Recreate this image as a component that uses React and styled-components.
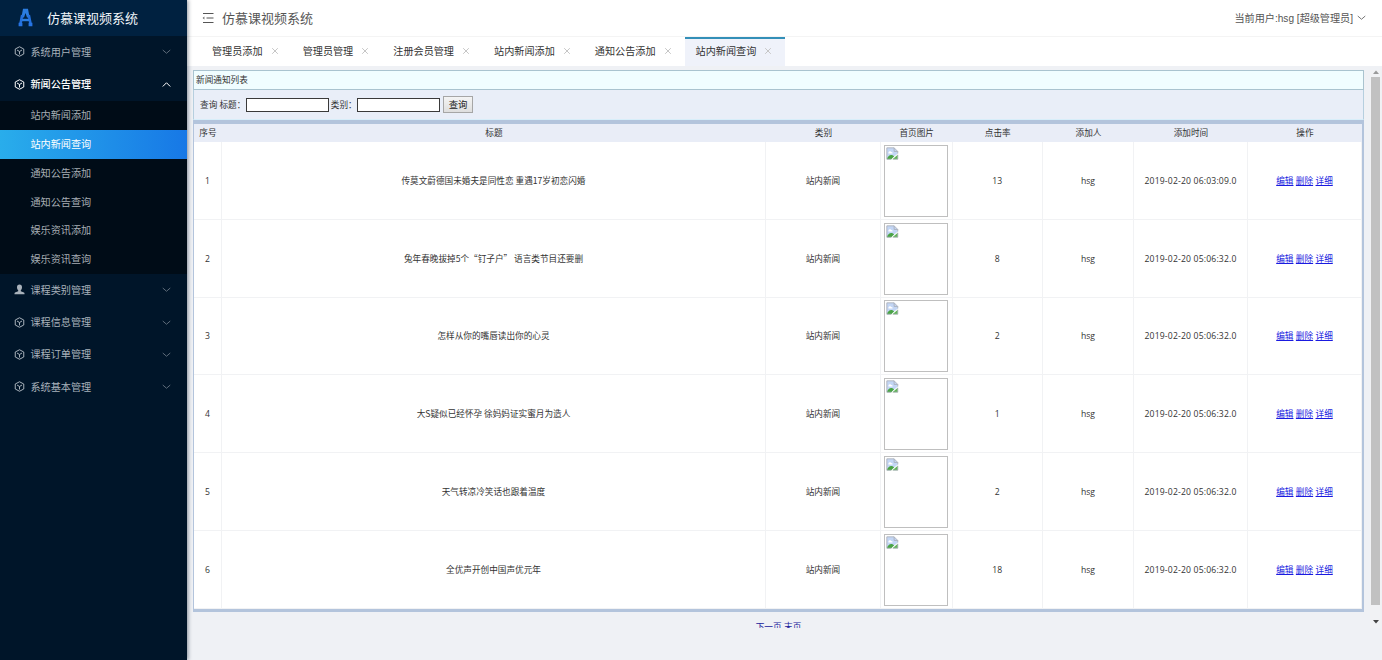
import React from 'react';
import styled, { createGlobalStyle } from 'styled-components';

const GlobalStyle = createGlobalStyle`
  * {
    box-sizing: border-box;
  }

  body {
    margin: 0;
    font-family: 'Open Sans', 'Noto Sans CJK SC', sans-serif;
    background: #eff1f5;
    overflow: hidden;
  }
`;

const Page = styled.div`
  display: flex;
  width: 1382px;
  height: 660px;
`;

/* ---------- sidebar ---------- */

const Sidebar = styled.aside`
  width: 187px;
  flex: none;
  background: #001529;
  box-shadow: 1px 0 4px rgba(0, 21, 41, 0.45);
  z-index: 1;
`;

const Brand = styled.div`
  height: 36px;
  padding: 0 0 1px 18px;
  display: flex;
  align-items: center;
  gap: 14px;
  background: #002140;
  color: #f2f6fa;
  font: 13px/20px 'Noto Sans CJK SC', sans-serif;
  white-space: nowrap;
`;

const MenuGroup = styled.div`
  height: 32.35px;
  padding: 0 16px 1px 14px;
  display: flex;
  align-items: center;
  color: ${(props) => (props.$open ? '#fff' : '#a9b2bb')};
  font: ${(props) => (props.$open ? 500 : 400)} 10.15px/16px 'Noto Sans CJK SC', sans-serif;

  span {
    flex: 1;
    margin-left: 5.5px;
  }
`;

const SubMenu = styled.div`
  padding-top: 0.6px;
  background: #000c17;
`;

const SubItem = styled.div`
  height: 28.8px;
  padding-left: 30.5px;
  font: 10.15px/28.8px 'Noto Sans CJK SC', sans-serif;
  color: ${(props) => (props.$active ? '#fff' : '#a6adb3')};
  background: ${(props) => (props.$active ? 'linear-gradient(90deg, #29adeb, #1778e6)' : 'none')};
`;

/* ---------- header and tabs ---------- */

const Content = styled.div`
  flex: 1;
  min-width: 0;
`;

const Header = styled.header`
  height: 37px;
  padding: 0 16px 1px 15px;
  display: flex;
  align-items: center;
  background: #fff;
  border-bottom: 1px solid #f4f4f4;
  color: #555;
`;

const HeaderTitle = styled.div`
  flex: 1;
  margin-left: 8px;
  font: 13px/20px 'Noto Sans CJK SC', sans-serif;
`;

const UserName = styled.div`
  margin: 2px 4px 0 0;
  font: 10.12px/16px 'Liberation Sans', 'Noto Sans CJK SC', sans-serif;
`;

const TabBar = styled.nav`
  height: 29px;
  padding-left: 14px;
  display: flex;
  background: #fff;
`;

const Tab = styled.div`
  padding: 0 13px 1px 11px;
  display: flex;
  align-items: center;
  gap: 8.1px;
  font: 10.12px/16px 'Noto Sans CJK SC', sans-serif;
  color: #333;
  background: ${(props) => (props.$active ? '#eff2fa' : 'none')};
  box-shadow: ${(props) => (props.$active ? 'inset 0 2px 0 #338fb8' : 'none')};
`;

/* ---------- framed page ---------- */

const Frame = styled.main`
  height: 562px;
  padding: 4px 0 0 6px;
  display: flex;
  overflow: hidden;
  font-size: 8.64px;
  line-height: 14px;
  color: #333;
`;

const FrameBody = styled.div`
  width: 1171px;
`;

const PanelTitle = styled.div`
  height: 20px;
  padding: 2px 0 0 2px;
  background: #f0fdff;
  border: 1px solid #a9c3cf;
`;

const SearchForm = styled.form`
  height: 30px;
  padding-left: 6px;
  display: flex;
  align-items: center;
  background: #e9eef8;
  border: 1px solid #b6cfdf;
  border-top: none;
  border-bottom-color: #d8eefa;
`;

const Field = styled.input`
  width: 83px;
  height: 14px;
  margin: 0 2px 0 0.4px;
  padding: 0;
  border: 1px solid #3a3a3a;
  background: #fff;
`;

const SearchButton = styled.button`
  width: 30px;
  height: 17px;
  margin-left: 1px;
  padding: 0 0 1px;
  border: 1px solid #a6a6a6;
  background: linear-gradient(#f4f4f4, #dedede);
  font: 9.4px/14px 'Noto Sans CJK SC', sans-serif;
  color: #222;
`;

const Table = styled.div`
  border: solid #b3c4dc;
  border-width: 4px 2px 3px 1px;
  background: #fff;
`;

const Row = styled.div`
  display: grid;
  grid-template-columns: 28px 544px 115px 71.5px 90.5px 91px 114px 1fr;
  height: ${(props) => (props.$head ? '18px' : '77.75px')};
  background: ${(props) => (props.$head ? '#e9edf7' : '#fff')};
`;

const Cell = styled.div`
  padding-top: ${(props) => (props.$head || props.$cjk ? '0' : '1px')};
  padding-bottom: ${(props) => (props.$cjk ? '1px' : '0')};
  display: flex;
  align-items: center;
  justify-content: center;
  gap: 2.4px;
  white-space: pre;
  letter-spacing: ${(props) => (props.$wide ? '0.17px' : 'normal')};
  border: solid #f1f2f4;
  border-width: ${(props) => (props.$head ? '0' : '0 1px 1px 0')};
  font-family: ${(props) => (props.$cjk ? "'Noto Sans CJK SC', sans-serif" : 'inherit')};
`;

const Thumb = styled.div`
  width: 64px;
  height: 72px;
  padding: 1px;
  border: 1px solid #bfbfbf;
`;

const Link = styled.a`
  color: #1a1ae0;
  text-decoration: underline;
`;

const Pager = styled.div`
  height: 24px;
  padding: 8px 0 0 0;
  display: flex;
  justify-content: center;
  gap: 2.4px;
  font-size: 8.64px;
  line-height: 14px;
  color: #20209a;
`;

const Scrollbar = styled.div`
  width: 11px;
  margin-left: 6px;
  display: flex;
  flex-direction: column;
  align-items: center;
  background: #f1f2f4;
`;

const ScrollThumb = styled.div`
  width: 9px;
  height: 528px;
  margin: 3px 0 15px;
  background: #c1c1c1;
`;

const CubeIcon = () => (
  <svg width="11" height="11" viewBox="0 0 22 22" fill="none" stroke="currentColor" strokeWidth="2" strokeLinejoin="round">
    <path d="M11 1.5 19.5 6v10L11 20.5 2.5 16V6z" />
    <path d="m6 8 5 3 5-3M11 11v6" />
  </svg>
);

const PersonIcon = () => (
  <svg width="11" height="11" viewBox="0 0 22 22" fill="currentColor">
    <path d="M11 1c3.2 0 5 2.200 5 5.300 0 2.700-1 4.700-2.400 6v2.200l6.400 2.700c.8.400 1 1 1 1.800v1.500H1V19c0-.8.300-1.400 1-1.800l6.400-2.700v-2.200C7 11 6 9 6 6.300 6 3.200 7.800 1 11 1z" />
  </svg>
);

const Chevron = ({ up, color, size = 9 }) => (
  <svg width={size} height={size} viewBox="0 0 18 18" fill="none" stroke={color} strokeWidth="2">
    <path d={up ? 'm1.500 13 7.500-7.500 7.500 7.500' : 'm1.500 6 7.500 6.500L16.500 6'} />
  </svg>
);

const CloseIcon = () => (
  <svg width="8" height="8" viewBox="0 0 8 8" stroke="#c6c6c6" strokeWidth="1">
    <path d="m1.200 1.200 5.600 5.600M6.800 1.200 1.200 6.800" />
  </svg>
);

const LogoIcon = () => (
  <svg width="15" height="19" viewBox="0 0 15 19" fill="none">
    <path d="M5 .8h5l1.600 8.700H9L7.500 5 6 9.500H3.400z" fill="#2b7de0" />
    <path d="M4.200 7 2.400 16M10.800 7l1.800 9" stroke="#2370dc" strokeWidth="2.600" />
    <path d="M4 12h7" stroke="#2a7ce0" strokeWidth="2.400" />
    <path d="M.6 14.800h3.800v3.400H.6zM10.600 14.800h3.800v3.400h-3.800z" fill="#2674e4" />
  </svg>
);

const FoldIcon = () => (
  <svg width="12" height="12" viewBox="0 0 12 12" stroke="#555" strokeWidth="1">
    <path d="M1 1.500h10.500M4.500 6h7M1 10.500h10.500" />
    <path d="M2.400 4.600v2.800L.6 6z" fill="#666" stroke="none" />
  </svg>
);

const BrokenImage = () => (
  <svg width="13" height="13" viewBox="0 0 16 16" style={{ display: 'block' }}>
    <path d="M1 1h9l4.500 4.500V8L6 15H1z" fill="#c3d6f5" />
    <path d="M3 7c0-2 3-2.500 3.500-1C8 6 8.500 7 8 8H3z" fill="#fff" />
    <path d="M1 15c1-4 4-6 7-5l2 1.500L6.500 15z" fill="#4aa445" />
    <path d="M14.500 9.500V15H8z" fill="#63b45b" />
    <path d="M1 15V1h9l4.500 4.500V8M1 15h5.500M8.500 15h6V9.500M10 1v4.500h4.500" fill="none" stroke="#a9aeb6" />
  </svg>
);

const Arrow = ({ up }) => (
  <svg width="6" height="4" viewBox="0 0 6 4" fill={up ? '#9a9a9a' : '#444'}>
    <path d={up ? 'M0 4 3 .5 6 4z' : 'M0 0h6L3 3.500z'} />
  </svg>
);

const subItems = ['站内新闻添加', '站内新闻查询', '通知公告添加', '通知公告查询', '娱乐资讯添加', '娱乐资讯查询'];
const tabs = ['管理员添加', '管理员管理', '注册会员管理', '站内新闻添加', '通知公告添加', '站内新闻查询'];
const columns = ['序号', '标题', '类别', '首页图片', '点击率', '添加人', '添加时间', '操作'];

const news = [
  { title: '传莫文蔚德国未婚夫是同性恋 重遇17岁初恋闪婚', hits: 13, time: '2019-02-20 06:03:09.0' },
  { title: '兔年春晚拔掉5个“钉子户” 语言类节目还要删', hits: 8, time: '2019-02-20 05:06:32.0' },
  { title: '怎样从你的嘴唇读出你的心灵', hits: 2, time: '2019-02-20 05:06:32.0' },
  { title: '大S疑似已经怀孕 徐妈妈证实蜜月为造人', hits: 1, time: '2019-02-20 05:06:32.0' },
  { title: '天气转凉冷笑话也跟着温度', hits: 2, time: '2019-02-20 05:06:32.0' },
  { title: '全优声开创中国声优元年', hits: 18, time: '2019-02-20 05:06:32.0' },
];

const Group = ({ label, open, icon = <CubeIcon /> }) => (
  <MenuGroup $open={open}>
    {icon}
    <span>{label}</span>
    <Chevron up={open} color={open ? '#fff' : '#5d6b79'} />
  </MenuGroup>
);

const App = () => {
  return (
    <Page>
      <GlobalStyle />
      <Sidebar>
        <Brand>
          <LogoIcon />
          仿慕课视频系统
        </Brand>
        <Group label="系统用户管理" />
        <Group label="新闻公告管理" open />
        <SubMenu>
          {subItems.map((item) => (
            <SubItem key={item} $active={item === '站内新闻查询'}>{item}</SubItem>
          ))}
        </SubMenu>
        <Group label="课程类别管理" icon={<PersonIcon />} />
        <Group label="课程信息管理" />
        <Group label="课程订单管理" />
        <Group label="系统基本管理" />
      </Sidebar>
      <Content>
        <Header>
          <FoldIcon />
          <HeaderTitle>仿慕课视频系统</HeaderTitle>
          <UserName>当前用户:hsg [超级管理员]</UserName>
          <Chevron color="#777" size={9} />
        </Header>
        <TabBar>
          {tabs.map((tab) => (
            <Tab key={tab} $active={tab === '站内新闻查询'}>
              {tab}
              <CloseIcon />
            </Tab>
          ))}
        </TabBar>
        <Frame>
          <FrameBody>
            <PanelTitle>新闻通知列表</PanelTitle>
            <SearchForm>
              查询 标题：
              <Field />
              类别：
              <Field />
              <SearchButton type="button">查询</SearchButton>
            </SearchForm>
            <Table>
              <Row $head>
                {columns.map((name) => (
                  <Cell key={name} $head>{name}</Cell>
                ))}
              </Row>
              {news.map((item, index) => (
                <Row key={item.title}>
                  <Cell>{index + 1}</Cell>
                  <Cell $cjk>{item.title}</Cell>
                  <Cell>站内新闻</Cell>
                  <Cell>
                    <Thumb>
                      <BrokenImage />
                    </Thumb>
                  </Cell>
                  <Cell>{item.hits}</Cell>
                  <Cell>hsg</Cell>
                  <Cell $wide>{item.time}</Cell>
                  <Cell>
                    <Link>编辑</Link>
                    <Link>删除</Link>
                    <Link>详细</Link>
                  </Cell>
                </Row>
              ))}
            </Table>
            <Pager>
              <span>下一页</span>
              <span>末页</span>
            </Pager>
          </FrameBody>
          <Scrollbar>
            <Arrow up />
            <ScrollThumb />
            <Arrow />
          </Scrollbar>
        </Frame>
      </Content>
    </Page>
  );
};

export default App;
